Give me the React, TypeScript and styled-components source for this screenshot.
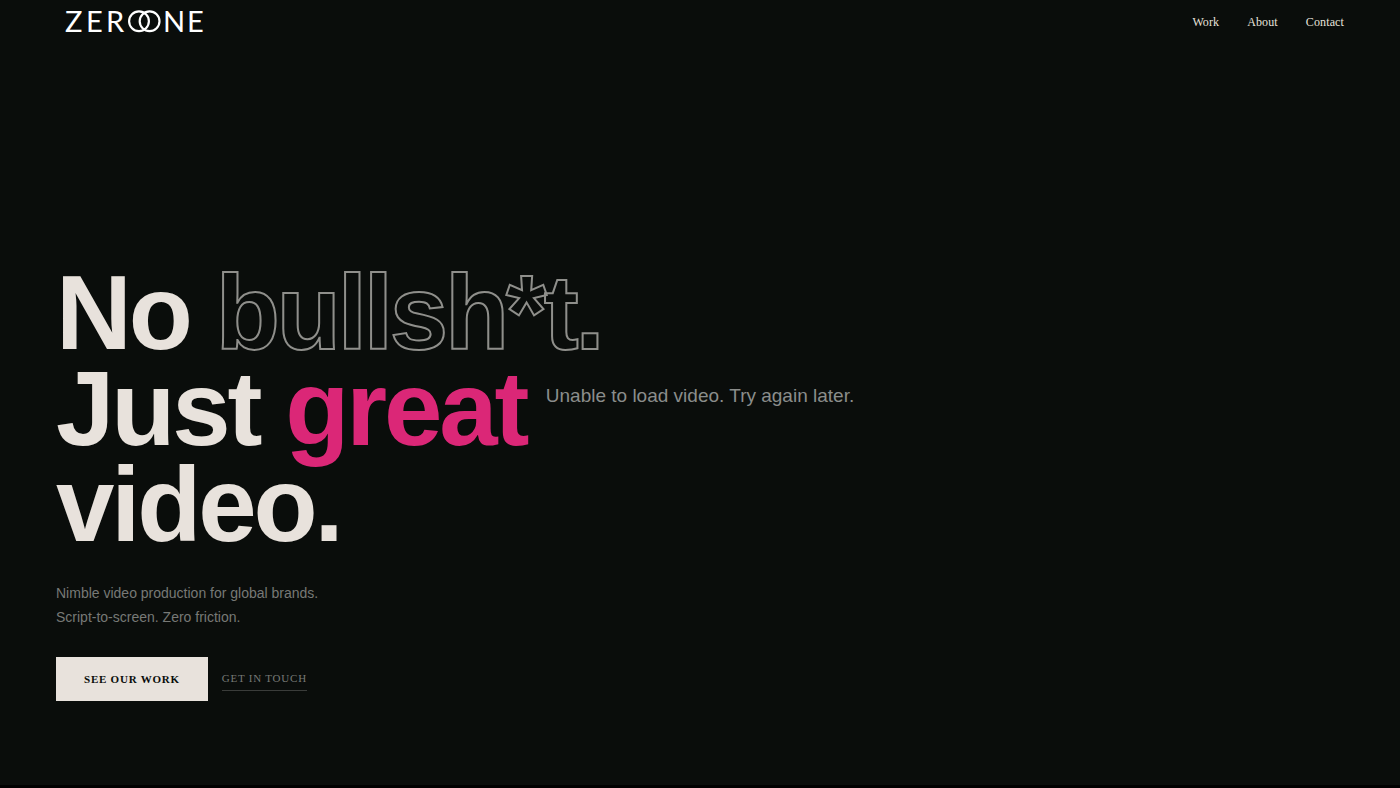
import React from "react";
import styled, { createGlobalStyle } from "styled-components";

const GlobalStyle = createGlobalStyle`
  * { box-sizing: border-box; }
  html, body, #root { height: 100%; }
  body {
    margin: 0;
    background: #0a0d0b;
    color: #e8e2dc;
    font-family: "Liberation Sans", Arial, sans-serif;
  }
`;

const Page = styled.div`
  position: relative;
  display: flex;
  flex-direction: column;
  min-height: 100%;
  border-bottom: 3px solid #000;
`;

const VideoLayer = styled.div`
  position: absolute;
  inset: 0;
  display: flex;
  align-items: center;
  justify-content: center;
  padding-top: 6px;
  pointer-events: none;
`;

const VideoMessage = styled.p`
  margin: 0;
  font-size: 19px;
  line-height: 24px;
  color: #8b8d8b;
`;

const Header = styled.header`
  position: relative;
  display: flex;
  align-items: center;
  justify-content: space-between;
  height: 44px;
  padding: 0 56px;
`;

const LogoLink = styled.a`
  display: flex;
  color: #ffffff;
`;

const Nav = styled.nav`
  display: flex;
  gap: 28px;
`;

const NavLink = styled.a`
  font-family: "Liberation Serif", "Times New Roman", serif;
  font-size: 12px;
  line-height: 16px;
  letter-spacing: 0.01em;
  color: #e8e2dc;
  text-decoration: none;
`;

const Hero = styled.main`
  position: relative;
  flex: 1;
  display: flex;
  flex-direction: column;
  align-items: flex-start;
  justify-content: flex-end;
  padding: 0 56px 84px;
`;

const Headline = styled.h1`
  margin: 0 0 28px;
  font-size: 105px;
  line-height: 96px;
  font-weight: 700;
  letter-spacing: -0.03em;
`;

const Line = styled.span`
  display: block;
`;

const Outlined = styled.span`
  color: transparent;
  -webkit-text-stroke: 2px #8f8f8b;
`;

const Accent = styled.em`
  font-style: normal;
  color: #db2777;
`;

const Lead = styled.p`
  margin: 0 0 28px;
  font-size: 14px;
  line-height: 24px;
  color: #777976;
`;

const Actions = styled.div`
  display: flex;
  align-items: center;
  gap: 14px;
`;

const ActionLink = styled.a`
  font-family: "Liberation Serif", "Times New Roman", serif;
  font-size: 11px;
  line-height: 16px;
  letter-spacing: 0.07em;
  text-transform: uppercase;
  text-decoration: none;
`;

const PrimaryLink = styled(ActionLink)`
  padding: 14px 28px;
  font-weight: 700;
  color: #0a0d0b;
  background: #e8e2dc;
`;

const SecondaryLink = styled(ActionLink)`
  padding: 3px 0 4px;
  color: #777976;
  border-bottom: 1px solid #3a3c3a;
`;

function Logo() {
  return (
    <svg width="160" height="44" viewBox="0 0 160 44" role="img" aria-label="Zero One">
      <g fill="currentColor" fontFamily="Lato, sans-serif" fontSize="29">
        <text x="9 30 50" y="32">ZER</text>
        <text x="107 131" y="32">NE</text>
      </g>
      <g fill="none" stroke="currentColor" strokeWidth="2.2">
        <circle cx="83" cy="21.3" r="9.9" />
        <circle cx="93.6" cy="21.3" r="9.9" />
      </g>
    </svg>
  );
}

const links = ["Work", "About", "Contact"];

export default function App() {
  return (
    <>
      <GlobalStyle />
      <Page>
        <VideoLayer>
          <VideoMessage>Unable to load video. Try again later.</VideoMessage>
        </VideoLayer>
        <Header>
          <LogoLink href="#home">
            <Logo />
          </LogoLink>
          <Nav>
            {links.map((label) => (
              <NavLink key={label} href={`#${label.toLowerCase()}`}>
                {label}
              </NavLink>
            ))}
          </Nav>
        </Header>
        <Hero>
          <Headline>
            <Line>
              No <Outlined>bullsh*t.</Outlined>
            </Line>
            <Line>
              Just <Accent>great</Accent>
            </Line>
            <Line>video.</Line>
          </Headline>
          <Lead>
            Nimble video production for global brands.
            <br />
            Script-to-screen. Zero friction.
          </Lead>
          <Actions>
            <PrimaryLink href="#work">See our work</PrimaryLink>
            <SecondaryLink href="#contact">Get in touch</SecondaryLink>
          </Actions>
        </Hero>
      </Page>
    </>
  );
}
